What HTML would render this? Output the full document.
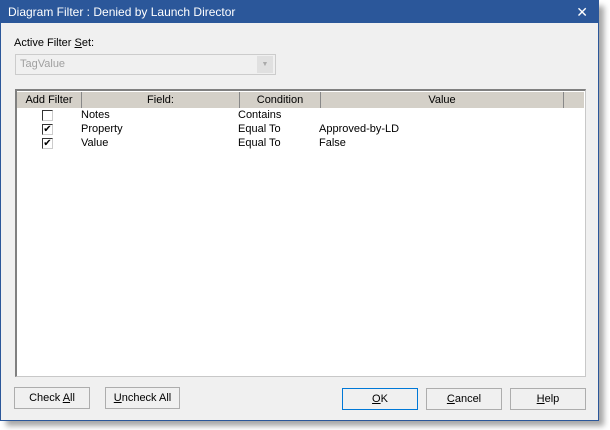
<!DOCTYPE html>
<html><head><style>
*{box-sizing:border-box;margin:0;padding:0}
body{width:610px;height:430px;background:#fff;position:relative;font-family:"Liberation Sans",sans-serif;font-size:11px;color:#000;overflow:hidden}
.shadow{position:absolute;left:6px;top:6px;width:598px;height:420px;background:rgba(0,0,0,.35);filter:blur(3px)}
.win{position:absolute;left:0;top:0;width:599px;height:421px;background:#f0f0f0;border:1px solid #2b579a}
.title{position:absolute;left:0;top:0;width:597px;height:22px;background:#2b579a;color:#fff;font-size:12px;line-height:22px;padding-left:7px}
.x{position:absolute;right:10px;top:0;font-size:14px;color:#fff}
.a{position:absolute}
.btn{position:absolute;height:22px;border:1px solid #adadad;background:#f0f0f0;text-align:center;line-height:20px;font-size:11px}
.hd{position:absolute;top:1px;height:16px;background:#d4d0c8;border-right:1px solid #888;line-height:16px;text-align:center;font-size:11px}
.cb{position:absolute;left:25px;width:11px;height:11px;border:1px solid #333;border-right-color:#ccc;border-bottom-color:#ccc;background:#fff;font-size:10px;line-height:9px;text-align:center}
.r{position:absolute;font-size:11px}
</style></head><body>
<div class="shadow"></div>
<div class="win">
<div class="title">Diagram Filter : Denied by Launch Director<span class="x">✕</span></div>
<div class="a" style="left:13px;top:36px">Active Filter <u>S</u>et:</div>
<div class="a" style="left:14px;top:53px;width:261px;height:21px;border:1px solid #ccc;background:#f0f0f0;color:#a0a0a0;line-height:19px;padding-left:4px">TagValue
<div class="a" style="right:2px;top:1px;width:16px;height:17px;background:#e0e0e0;color:#aaa;font-size:7px;text-align:center;line-height:17px">▼</div></div>
<div class="a" style="left:14px;top:88px;width:571px;height:288px;background:#fff;border:1px solid #c8c8c8;border-top:2px solid #808080;border-left:2px solid #808080">
<div class="hd" style="left:0;width:65px">Add Filter</div>
<div class="hd" style="left:65px;width:158px">Field:</div>
<div class="hd" style="left:223px;width:81px">Condition</div>
<div class="hd" style="left:304px;width:243px">Value</div>
<div class="hd" style="left:547px;width:20px;border-right:none"></div>
<div class="cb" style="top:19px"></div><div class="r" style="left:64px;top:18px">Notes</div><div class="r" style="left:221px;top:18px">Contains</div>
<div class="cb" style="top:33px">✔</div><div class="r" style="left:64px;top:32px">Property</div><div class="r" style="left:221px;top:32px">Equal To</div><div class="r" style="left:302px;top:32px">Approved-by-LD</div>
<div class="cb" style="top:47px">✔</div><div class="r" style="left:64px;top:46px">Value</div><div class="r" style="left:221px;top:46px">Equal To</div><div class="r" style="left:302px;top:46px">False</div>
</div>
<div class="btn" style="left:13px;top:386px;width:76px">Check <u>A</u>ll</div>
<div class="btn" style="left:104px;top:386px;width:75px"><u>U</u>ncheck All</div>
<div class="btn" style="left:341px;top:387px;width:76px;border-color:#0078d7"><u>O</u>K</div>
<div class="btn" style="left:425px;top:387px;width:76px"><u>C</u>ancel</div>
<div class="btn" style="left:509px;top:387px;width:76px"><u>H</u>elp</div>
</div>
</body></html>
